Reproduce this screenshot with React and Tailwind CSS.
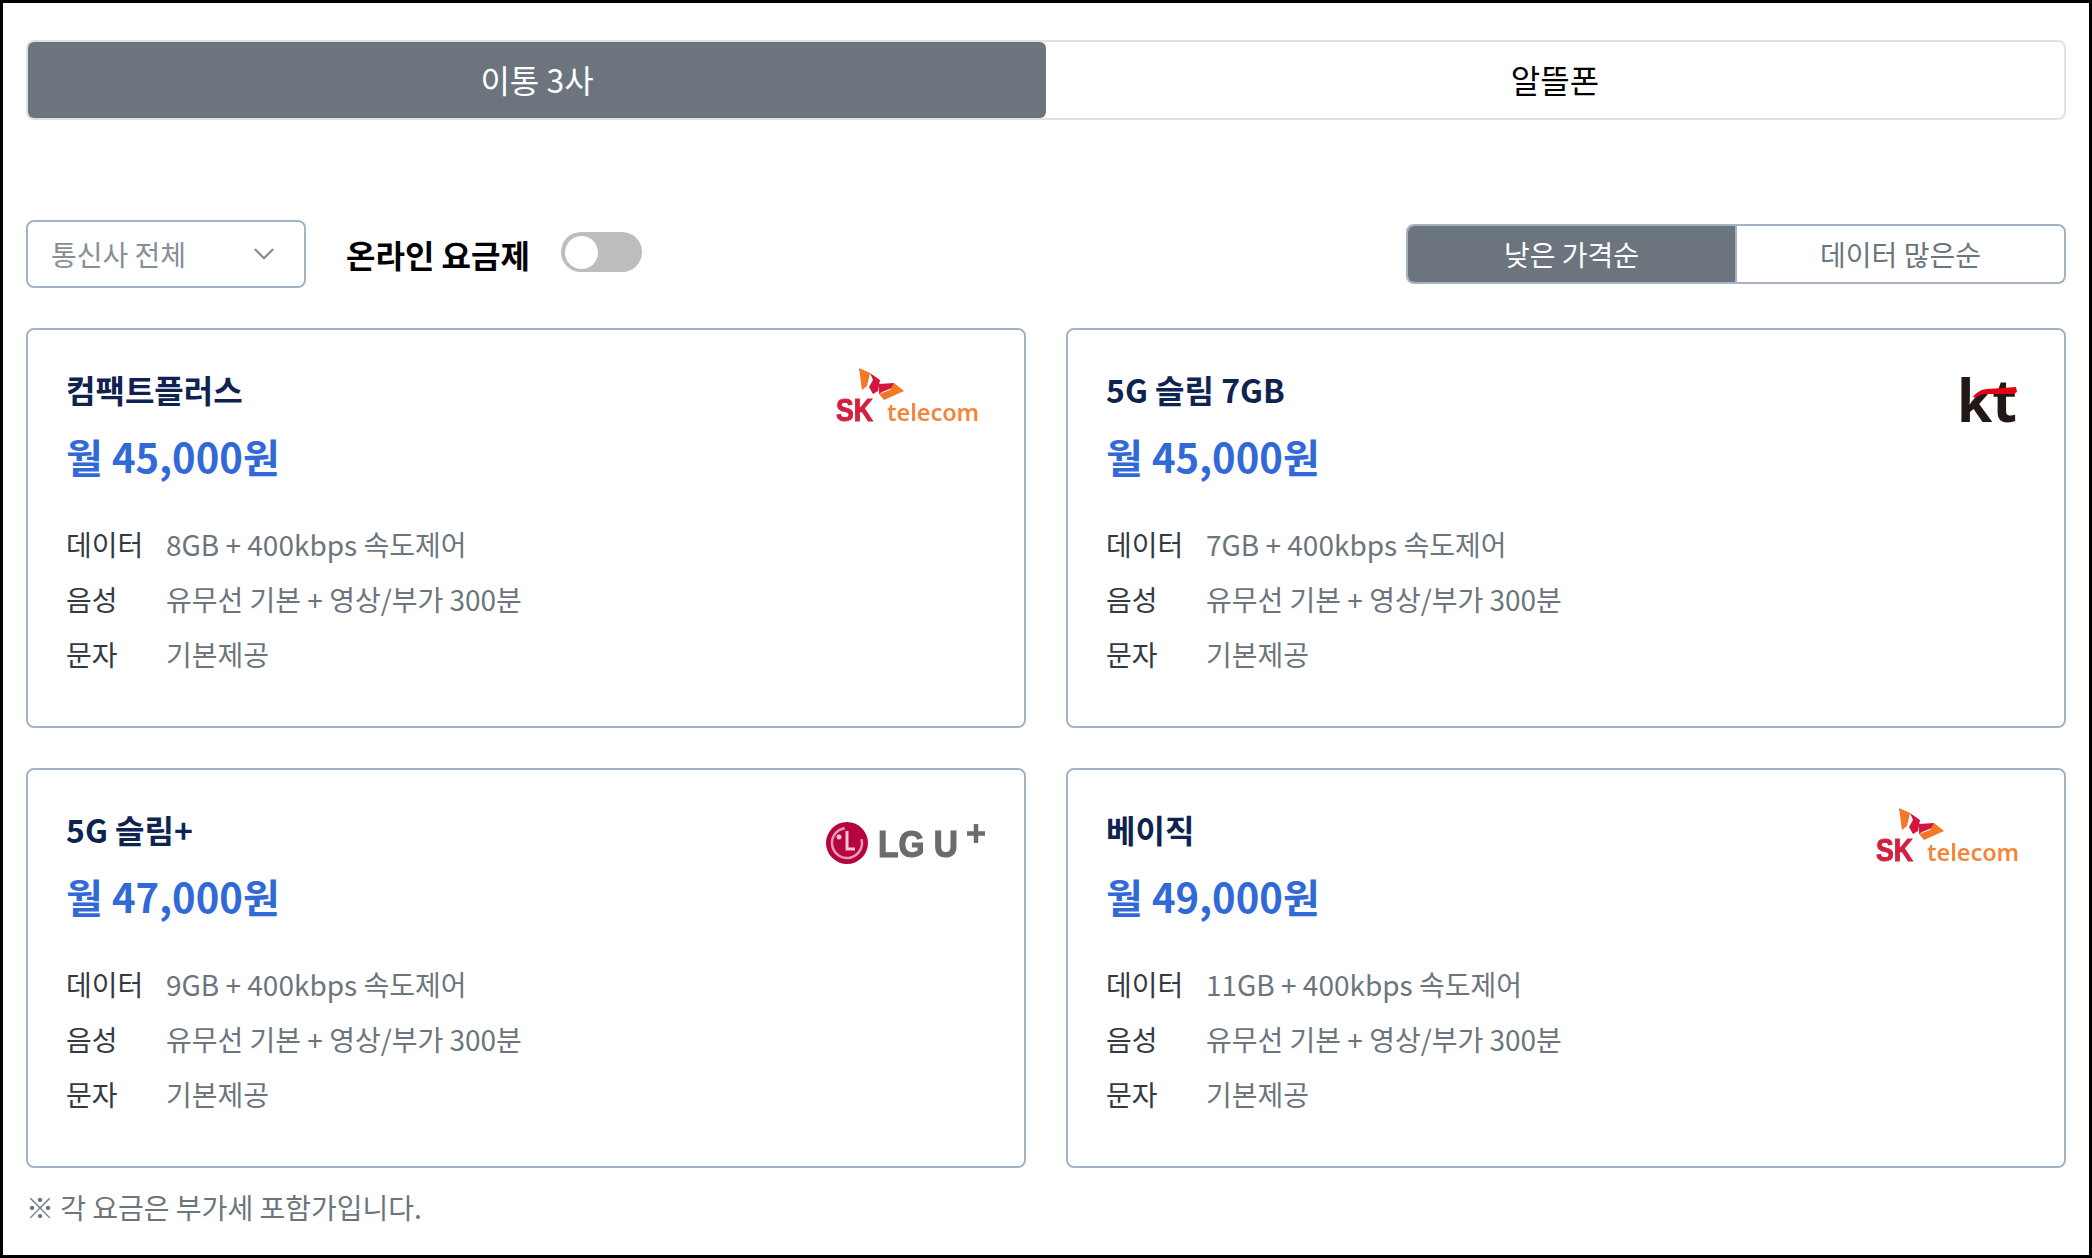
import React from 'react'
import { ChevronDown } from 'lucide-react'

const plans = [
    { id: 1, name: '컴팩트플러스', price: '월 45,000원', data: '8GB + 400kbps 속도제어', logo: 'sk' },
    { id: 2, name: '5G 슬림 7GB', price: '월 45,000원', data: '7GB + 400kbps 속도제어', logo: 'kt' },
    { id: 3, name: '5G 슬림+', price: '월 47,000원', data: '9GB + 400kbps 속도제어', logo: 'lg' },
    { id: 4, name: '베이직', price: '월 49,000원', data: '11GB + 400kbps 속도제어', logo: 'sk' },
]

const SkLogo = () => (
    <svg width="144" height="60" viewBox="0 0 144 60" className="blur-[0.5px] overflow-visible">
        <path d="M23 1 L34 6 L31 19 L26 23 Z" fill="#f47725" />
        <path d="M34 6 L44 13 L42 24 L37 27 L33 20 L37 13 Z" fill="#d4143a" />
        <path d="M43 17 L58 16 L56 21 L46 25 L43 27 Z" fill="#d4143a" />
        <path d="M58 16 L68 24 L48 33 L43 27 L54 23 Z" fill="#f47725" />
        <text x="0" y="54" fontFamily="Liberation Sans" fontWeight="700" fontSize="31" textLength="37" lengthAdjust="spacingAndGlyphs" stroke="#d4203f" strokeWidth="1" fill="#d4203f">SK</text>
        <text x="51" y="54" fontFamily="Noto Sans" fontWeight="600" fontSize="24" textLength="92" lengthAdjust="spacingAndGlyphs" fill="#f5853a">telecom</text>
    </svg>
)

const KtLogo = () => (
    <svg width="60" height="56" viewBox="0 0 60 56" className="blur-[0.4px] overflow-visible">
        <text x="-3" y="49" fontFamily="Noto Sans" fontWeight="700" fontSize="60" textLength="60" lengthAdjust="spacingAndGlyphs" fill="#231815">kt</text>
        <path d="M13 24 Q19 16 28 16 L56 14 L57 19 Q55 21 51 21 L26 21 Q20 21 16 25 Z" fill="#e60012" />
    </svg>
)

const LgLogo = () => (
    <svg width="162" height="48" viewBox="0 0 162 48" className="blur-[0.5px] overflow-visible">
        <circle cx="23" cy="23" r="21" fill="#b5043f" />
        <circle cx="23" cy="23" r="15" fill="none" stroke="#e89ab0" strokeWidth="2.5" strokeDasharray="72 22" transform="rotate(-15 23 23)" />
        <circle cx="15" cy="17" r="2.5" fill="#f3c6d3" />
        <path d="M23 11 V29 H31" fill="none" stroke="#f3c6d3" strokeWidth="3" />
        <text x="54" y="37" fontFamily="Liberation Sans" fontWeight="700" fontSize="36" textLength="80" lengthAdjust="spacingAndGlyphs" stroke="#6b6b6b" strokeWidth="1.2" fill="#6b6b6b">LG U</text>
        <path d="M143 13.5 H161 M152 4 V23" fill="none" stroke="#6b6b6b" strokeWidth="4.5" />
    </svg>
)

const Logo = ({ type }) => {
    if (type === 'kt') return <KtLogo />
    if (type === 'lg') return <LgLogo />
    return <SkLogo />
}

const InfoRow = ({ label, value }) => (
    <div className="flex items-center h-[55px]">
        <div className="w-[100px] shrink-0 text-[#343a40]">{label}</div>
        <div className="text-[#6c757d]">{value}</div>
    </div>
)

const PlanCard = ({ plan }) => (
    <div className="h-[400px] border-2 border-[#a3b2c4] rounded-lg px-[38px] pt-[36px]">
        <div className="flex justify-between items-start">
            <div>
                <div className="text-[32px] leading-[46px] font-bold text-[#0f2350]">{plan.name}</div>
                <div className="text-[40px] leading-[60px] mt-[14px] font-bold text-[#3269d8]">{plan.price}</div>
            </div>
            <div className={plan.logo === 'kt' ? 'mt-[7px] mr-[6px]' : plan.logo === 'lg' ? 'mt-[14px]' : 'mt-[1px] mr-[6px]'}>
                <Logo type={plan.logo} />
            </div>
        </div>
        <div className="mt-[30px] text-[28px]">
            <InfoRow label="데이터" value={plan.data} />
            <InfoRow label="음성" value="유무선 기본 + 영상/부가 300분" />
            <InfoRow label="문자" value="기본제공" />
        </div>
    </div>
)

const App = () => {
    return (
        <div className="w-[2092px] h-[1258px] border-[3px] border-black bg-white px-[23px] pt-[37px] font-['Noto_Sans_CJK_KR','Noto_Sans',sans-serif] overflow-hidden">
            <div className="flex h-[80px] border-2 border-[#dee2e6] rounded-lg text-[32px]">
                <div className="flex-1 flex items-center justify-center pb-[2px] bg-[#6c757d] text-white rounded-md">이통 3사</div>
                <div className="flex-1 flex items-center justify-center pb-[2px] text-black">알뜰폰</div>
            </div>

            <div className="flex items-center mt-[101px] h-[66px]">
                <div className="w-[280px] h-[68px] border-2 border-[#a3b2c4] rounded-lg flex items-center justify-between pl-[23px] pr-[23px] text-[28px] text-[#868e96]">
                    <span>통신사 전체</span>
                    <ChevronDown size={34} strokeWidth={1.6} className="text-[#868e96]" />
                </div>
                <div className="ml-[40px] text-[32px] font-bold text-black">온라인 요금제</div>
                <div className="ml-[31px] w-[81px] h-[40px] -mt-[4px] rounded-full bg-[#bdbdbd] flex items-center pl-[4px]">
                    <div className="w-[33px] h-[33px] rounded-full bg-white" />
                </div>
                <div className="ml-auto flex w-[660px] h-[60px] border-2 border-[#a3b2c4] rounded-lg overflow-hidden text-[28px]">
                    <div className="flex-1 flex items-center justify-center bg-[#6c757d] text-white">낮은 가격순</div>
                    <div className="flex-1 flex items-center justify-center border-l-2 border-[#a3b2c4] text-[#6c757d]">데이터 많은순</div>
                </div>
            </div>

            <div className="grid grid-cols-2 gap-x-[40px] gap-y-[40px] mt-[41px]">
                {plans.map((plan) => (
                    <PlanCard key={plan.id} plan={plan} />
                ))}
            </div>

            <div className="mt-[18px] text-[28px] text-[#6c757d]">※ 각 요금은 부가세 포함가입니다.</div>
        </div>
    )
}

export default App
